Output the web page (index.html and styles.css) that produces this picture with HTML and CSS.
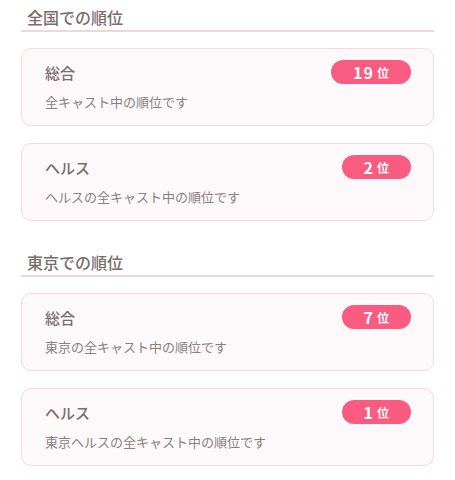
FILE: index.html
```html
<!DOCTYPE html>
<html lang="ja">
<head>
  <meta charset="UTF-8">
  <title>順位</title>
  <link rel="stylesheet" href="styles.css">
</head>
<body>

  <section class="rank-section">
    <h2 class="section-title">全国での順位</h2>

    <div class="rank-card">
      <div class="rank-head">
        <h3>総合</h3>
        <span class="badge"><b>19</b><small>位</small></span>
      </div>
      <p>全キャスト中の順位です</p>
    </div>

    <div class="rank-card">
      <div class="rank-head">
        <h3>ヘルス</h3>
        <span class="badge"><b>2</b><small>位</small></span>
      </div>
      <p>ヘルスの全キャスト中の順位です</p>
    </div>
  </section>

  <section class="rank-section">
    <h2 class="section-title">東京での順位</h2>

    <div class="rank-card">
      <div class="rank-head">
        <h3>総合</h3>
        <span class="badge"><b>7</b><small>位</small></span>
      </div>
      <p>東京の全キャスト中の順位です</p>
    </div>

    <div class="rank-card">
      <div class="rank-head">
        <h3>ヘルス</h3>
        <span class="badge"><b>1</b><small>位</small></span>
      </div>
      <p>東京ヘルスの全キャスト中の順位です</p>
    </div>
  </section>

</body>
</html>
```

FILE: styles.css
```css
* {
  margin: 0;
  padding: 0;
  box-sizing: border-box;
}

body {
  background: #ffffff;
  padding: 0 21px;
  font-family: "Noto Sans CJK JP", "Noto Sans", sans-serif;
  color: #7a6b6b;
}

.rank-section + .rank-section {
  margin-top: 24px;
}

.section-title {
  font-size: 16px;
  line-height: 24px;
  font-weight: 500;
  padding: 5px 6px 1px;
  border-bottom: 2px solid #f2d6d6;
  margin-bottom: 16px;
}

.rank-card {
  background: #fdf9fa;
  border: 1px solid #f5dadb;
  border-radius: 10px;
  padding: 11px 22px 13px;
}

.rank-card + .rank-card {
  margin-top: 17px;
}

.rank-head {
  display: flex;
  justify-content: space-between;
  align-items: center;
  height: 24px;
  margin-bottom: 8px;
}

.rank-head h3 {
  font-size: 15px;
  font-weight: 500;
  padding-left: 1px;
}

.badge {
  display: flex;
  align-items: center;
  height: 24px;
  padding: 0 22px;
  border-radius: 12px;
  background: #fa5b81;
  color: #ffffff;
}

.badge b {
  font-size: 16px;
  letter-spacing: 1px;
}

.badge small {
  font-size: 12px;
  font-weight: bold;
  margin-left: 3px;
}

.rank-card p {
  font-size: 13px;
  line-height: 20px;
  color: #8a7f7f;
  padding-left: 1px;
}
```
